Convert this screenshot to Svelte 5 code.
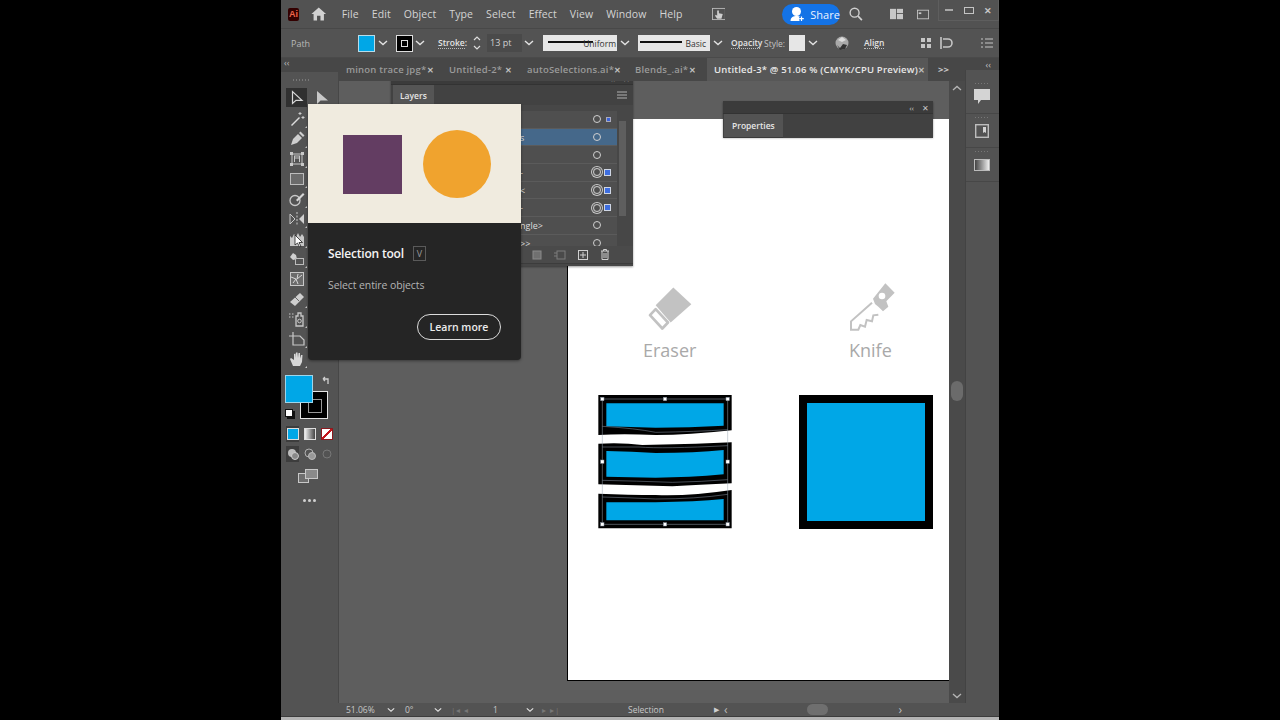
<script>
  const menus = ['File', 'Edit', 'Object', 'Type', 'Select', 'Effect', 'View', 'Window', 'Help'];
  const tabs = [
    { name: 'minon trace jpg*', w: 103 },
    { name: 'Untitled-2*', w: 78 },
    { name: 'autoSelections.ai*', w: 108 },
    { name: 'Blends_.ai*', w: 76 }
  ];
  const layerRows = [
    { label: '', target: 'small' },
    { label: 's', target: '', selected: true },
    { label: '', target: '' },
    { label: '-', target: 'big' },
    { label: '<', target: 'big' },
    { label: '-', target: 'big' },
    { label: 'ngle>', target: '' },
    { label: '>>', target: '' }
  ];
</script>

{#snippet chev(cls = '')}
  <svg class="chev {cls}" viewBox="0 0 10 6" width="10" height="6"><path d="M1 1l4 3.6L9 1" fill="none" stroke="#e2e2e2" stroke-width="1.4" /></svg>
{/snippet}

<div class="window">
  <header class="menubar">
    <div class="ai-logo">Ai</div>
    <svg class="home" viewBox="0 0 18 16" width="18" height="16"><path d="M9 0.5L0.5 8h2.500v7.500h4V10h4v5.500h4V8h2.500z" fill="#d2d2d2" /></svg>
    <nav class="menus">
      {#each menus as m}
        <span>{m}</span>
      {/each}
    </nav>
    <svg class="arrange" viewBox="0 0 16 14" width="16" height="14"><rect x="0.500" y="0.500" width="15" height="13" fill="none" stroke="#bdbdbd" /><path d="M6 3v6l-1.500-1-1 1L6 12.500h5L12.500 7 8 6V3z" fill="#cfcfcf" /></svg>
    <div class="share">
      <svg viewBox="0 0 16 16" width="16" height="16"><circle cx="7.500" cy="5.500" r="4.500" fill="#fff" /><path d="M1.500 15c0-4 3-5 6-5s6 1 6 5z" fill="#fff" /><path d="M12.500 10.500v4.500M10.200 12.700h4.600" stroke="#1473e6" stroke-width="3.600" /><path d="M12.500 10.500v4.500M10.200 12.700h4.600" stroke="#fff" stroke-width="1.200" /></svg>
      <span>Share</span>
    </div>
    <svg class="search" viewBox="0 0 16 16" width="16" height="16"><circle cx="6.500" cy="6.500" r="5.200" fill="none" stroke="#d0d0d0" stroke-width="1.600" /><path d="M10.500 10.500L15 15" stroke="#d0d0d0" stroke-width="2" /></svg>
    <svg class="wsp" viewBox="0 0 16 12" width="16" height="12"><rect width="7" height="12" fill="#c8c8c8" /><rect x="8" width="8" height="5" fill="#c8c8c8" /><rect x="8" y="6" width="8" height="6" fill="#c8c8c8" /></svg>
    <svg class="wsp2" viewBox="0 0 14 11" width="14" height="11"><rect x="0.500" y="0.500" width="13" height="10" fill="none" stroke="#c8c8c8" /><rect x="2" y="3" width="3" height="2" fill="#c8c8c8" /></svg>
    <div class="winbtns">
      <span class="min"></span>
      <span class="max"></span>
      <span class="close">✕</span>
    </div>
  </header>

  <div class="controlbar">
    <span class="path-label">Path</span>
    <span class="swatch fill"></span>
    {@render chev('c-fill')}
    <span class="swatch stroke"><i></i></span>
    {@render chev('c-stroke')}
    <span class="link stroke-label">Stroke:</span>
    <svg class="stepper" viewBox="0 0 8 16" width="8" height="16"><path d="M1 5l3-3 3 3M1 11l3 3 3-3" fill="none" stroke="#ddd" stroke-width="1.200" /></svg>
    <span class="field">13 pt</span>
    {@render chev('c-pt')}
    <span class="strokebox uniform"><i></i><b>Uniform</b></span>
    {@render chev('c-uni')}
    <span class="strokebox basic"><i></i><b>Basic</b></span>
    {@render chev('c-basic')}
    <span class="link opacity">Opacity</span>
    <span class="style-label">Style:</span>
    <span class="swatch style"></span>
    {@render chev('c-style')}
    <svg class="globe" viewBox="0 0 14 14" width="14" height="14"><circle cx="7" cy="7" r="6.500" fill="#aaa" /><path d="M2 9l3 3 3-4 4 1-2 4-5 1z" fill="#333" /><path d="M3 4l4-3 4 3-4 2z" fill="#ddd" /></svg>
    <span class="link align">Align</span>
    <svg class="ctl-icon i1" viewBox="0 0 12 12" width="12" height="12"><path d="M1 1h4v4H1zM7 1h4v4H7zM1 7h4v4H1zM7 7h4v4H7z" fill="#c6c6c6" /></svg>
    <svg class="ctl-icon i2" viewBox="0 0 14 12" width="14" height="12"><path d="M1 0v12M3 2h5a4 4 0 010 8H3" fill="none" stroke="#c6c6c6" stroke-width="1.600" /></svg>
    <svg class="ctl-icon i3" viewBox="0 0 12 10" width="12" height="10"><path d="M0 1h2M4 1h8M0 5h2M4 5h8M0 9h2M4 9h8" stroke="#c6c6c6" stroke-width="1.200" /></svg>
  </div>

  <div class="tabsbar">
    <span class="tabs-grip">‹‹</span>
    <div class="tabs">
      {#each tabs as t}
        <div class="tab" style="width: {t.w}px"><span>{t.name}</span><em>✕</em></div>
      {/each}
      <div class="tab active"><span>Untitled-3* @ 51.06 % (CMYK/CPU Preview)</span><em>✕</em></div>
    </div>
    <span class="more">&gt;&gt;</span>
    <span class="dock-grip">‹‹</span>
  </div>

  <div class="workspace">
    <aside class="tools">
      <div class="dots"></div>
      <div class="toolrow">
        <span class="tool sel"><svg viewBox="0 0 16 16" width="16" height="16"><path d="M3.500 1.500v12l3.500-3.200h6z" fill="none" stroke="#d8d8d8" stroke-width="1.200" /></svg></span>
        <span class="tool more-tri"><svg viewBox="0 0 16 16" width="16" height="16"><path d="M3 1v13l3.500-3.500H14z" fill="#c8c8c8" /></svg></span>
      </div>
      <span class="tool more-tri"><svg viewBox="0 0 16 16" width="16" height="16"><path d="M2 14l8-8 1 1-8 8z" fill="#ddd" /><path d="M11 1v3M9.500 2.500h3M14 5v3M12.500 6.500h3" stroke="#ccc" /></svg></span>
      <span class="tool more-tri"><svg viewBox="0 0 16 16" width="16" height="16"><path d="M2 14l2-6 5-5 4 4-5 5z" fill="#cfcfcf" /><path d="M10 2l1.500-1.500 4 4L14 6z" fill="#cfcfcf" /></svg></span>
      <span class="tool more-tri"><svg viewBox="0 0 16 16" width="16" height="16"><path d="M3 3h10v10H3z" fill="none" stroke="#c8c8c8" /><path d="M5.500 5v6M10.500 5v6M5 5h6M5 7h6" stroke="#c8c8c8" /><path d="M1 1h3v3H1zM12 1h3v3h-3zM1 12h3v3H1zM12 12h3v3h-3z" fill="#c8c8c8" /></svg></span>
      <span class="tool more-tri"><svg viewBox="0 0 16 16" width="16" height="16"><rect x="1.500" y="2.500" width="13" height="11" fill="#6b6b6b" stroke="#bcbcbc" /></svg></span>
      <span class="tool more-tri"><svg viewBox="0 0 16 16" width="16" height="16"><circle cx="6" cy="9.500" r="5" fill="none" stroke="#c8c8c8" stroke-width="1.300" /><path d="M7 9l7-7 1.500 1.500-7 7z" fill="#d6d6d6" /></svg></span>
      <span class="tool more-tri"><svg viewBox="0 0 16 16" width="16" height="16"><path d="M1 3v10l5-5z" fill="none" stroke="#c8c8c8" /><path d="M15 3v10l-5-5z" fill="#d0d0d0" /><path d="M8 1v14" stroke="#c8c8c8" stroke-dasharray="2 1.500" /></svg></span>
      <span class="tool more-tri"><svg viewBox="0 0 16 16" width="16" height="16"><path d="M1 15V5l2 2 2-4 2 3 2-4 2 4 2-3 2 3v9z" fill="#c8c8c8" /></svg></span>
      <span class="tool more-tri"><svg viewBox="0 0 16 16" width="16" height="16"><path d="M1 6l3-4 3 2 1 4-4 1z" fill="#d0d0d0" /><rect x="6.500" y="7.500" width="8" height="6" fill="none" stroke="#bcbcbc" /></svg></span>
      <span class="tool"><svg viewBox="0 0 16 16" width="16" height="16"><rect x="1.500" y="1.500" width="13" height="13" fill="#6b6b6b" stroke="#c8c8c8" /><path d="M2 6l5 2 2 5M8 8l5-4M4 12l3-4M9 3l-1 5" stroke="#d8d8d8" fill="none" /></svg></span>
      <span class="tool more-tri"><svg viewBox="0 0 16 16" width="16" height="16"><path d="M1 11L11 2l4 4L6 15z" fill="#cfcfcf" /><path d="M6 6l4 4" stroke="#666" /></svg></span>
      <span class="tool more-tri"><svg viewBox="0 0 16 16" width="16" height="16"><path d="M7 5h2V2h3v3h2v10H7z" fill="none" stroke="#c8c8c8" stroke-width="1.300" /><circle cx="10.500" cy="10" r="1.800" fill="none" stroke="#c8c8c8" /><path d="M0 3h1.500M3 3h1.500M0 6h1.500M3 6h1.500" stroke="#c8c8c8" /></svg></span>
      <span class="tool more-tri"><svg viewBox="0 0 16 16" width="16" height="16"><path d="M0 5h11l4 4v5H4V1" fill="none" stroke="#c8c8c8" stroke-width="1.200" /></svg></span>
      <span class="tool more-tri"><svg viewBox="0 0 16 16" width="16" height="16"><path d="M4 15L1 8l1-1 3 2V3l1.500-.5L7 7V1.500h1.500L9 7l.5-5H11v5.500L12 4h1.500L13 11l-2 4z" fill="#d8d8d8" /></svg></span>

      <div class="colors">
        <svg class="swap" viewBox="0 0 10 10" width="10" height="10"><path d="M2 3h5v5M2 3l2-2M2 3l2 2" fill="none" stroke="#cfcfcf" stroke-width="1.300" /></svg>
        <span class="big-stroke"><i></i></span>
        <span class="big-fill"></span>
        <span class="defaults"></span>
      </div>
      <div class="moderow">
        <span class="mode on"><i class="m-color"></i></span>
        <span class="mode"><i class="m-grad"></i></span>
        <span class="mode"><i class="m-none"></i></span>
      </div>
      <div class="moderow draw">
        <span class="mode on"><svg viewBox="0 0 12 12" width="12" height="12"><circle cx="5" cy="5" r="4" fill="#bbb" /><circle cx="8" cy="8" r="3.500" fill="#888" stroke="#ccc" /></svg></span>
        <span class="mode"><svg viewBox="0 0 12 12" width="12" height="12"><circle cx="5" cy="5" r="4" fill="none" stroke="#b0b0b0" /><circle cx="8" cy="8" r="3.500" fill="#999" stroke="#bbb" /></svg></span>
        <span class="mode"><svg viewBox="0 0 12 12" width="12" height="12"><circle cx="6" cy="6" r="4" fill="none" stroke="#777" /></svg></span>
      </div>
      <svg class="screen" viewBox="0 0 20 14" width="20" height="14"><rect x="0.500" y="4.500" width="10" height="9" fill="#6e6e6e" stroke="#c8c8c8" /><rect x="7.500" y="0.500" width="12" height="9" fill="#8a8a8a" stroke="#c8c8c8" /></svg>
      <div class="ellipsis"><i></i><i></i><i></i></div>
    </aside>

    <main class="canvas">
      <div class="artboard">
        <svg class="pic eraser" viewBox="160 15 150 140" width="50" height="47">
          <path d="M248 25l54 50-62 55-45-52z" fill="#c2c2c2" />
          <path d="M195 90l-17 18 37 40 17-18z" fill="#fff" stroke="#c2c2c2" stroke-width="8" stroke-linejoin="round" />
        </svg>
        <span class="caption c-eraser">Eraser</span>
        <svg class="pic knife" viewBox="770 10 150 150" width="50" height="50">
          <path d="M885 14l28 28-25 26 6 16-16 14-14-14-10-8-6-16z" fill="#c2c2c2" />
          <circle cx="875" cy="52" r="10" fill="#fff" />
          <path d="M845 72L782 128v25h22l6-14 14 5 5-20 16 4 4-18 15-2" fill="#fff" stroke="#c2c2c2" stroke-width="6" />
        </svg>
        <span class="caption c-knife">Knife</span>

        <svg class="pic split" viewBox="0 0 480 450" width="160" height="150">
          <path d="M28 30H428V136Q300 150 200 150Q100 146 28 150Z" fill="#000" />
          <path d="M52 55H404V122Q300 128 200 128L52 124Z" fill="#00a7e7" />
          <path d="M28 176Q100 172 160 180L320 176L428 172V295Q330 300 250 304L28 298Z" fill="#000" />
          <path d="M52 198Q130 200 200 204Q320 204 404 195V268Q300 278 200 278L52 275Z" fill="#00a7e7" />
          <path d="M28 326Q120 330 200 330Q300 334 428 315V430H28Z" fill="#000" />
          <path d="M52 352L200 352Q320 350 404 342V406H52Z" fill="#00a7e7" />
          <path d="M40 42H416V418H40Z" fill="none" stroke="#9aa6b4" stroke-width="1.500" />
          <path d="M40 124Q140 130 200 142Q320 140 416 134M40 186L150 186Q220 192 416 182M40 286Q140 288 250 292Q340 290 416 284M40 336Q120 338 200 342Q320 342 416 328" fill="none" stroke="#8d99a8" stroke-width="1.500" />
          {#each [[40, 42], [228, 42], [416, 42], [40, 230], [416, 230], [40, 418], [228, 418], [416, 418]] as [x, y]}
            <rect x={x - 5} y={y - 5} width="10" height="10" fill="#fff" stroke="#7f8a99" stroke-width="1.500" />
          {/each}
        </svg>

        <div class="pic whole"></div>
      </div>

      <section class="layers">
        <div class="float-head"><span>‹‹</span><em>✕</em></div>
        <div class="float-tabs">
          <span class="float-tab">Layers</span>
          <svg viewBox="0 0 10 8" width="10" height="8"><path d="M0 1h10M0 4h10M0 7h10" stroke="#b0b0b0" /></svg>
        </div>
        <div class="layer-list">
          <div class="rows">
            {#each layerRows as r}
              <div class="lrow" class:selected={r.selected}>
                <span class="ltext">{r.label}</span>
                <span class="target" class:ring={r.target === 'big'}></span>
                <span class="mark {r.target}"></span>
              </div>
            {/each}
          </div>
          <div class="lscroll"><i></i></div>
        </div>
        <div class="layer-foot">
          <svg viewBox="0 0 10 10" width="10" height="10"><rect x="1" y="1" width="8" height="8" fill="#707070" stroke="#8a8a8a" /></svg>
          <svg viewBox="0 0 12 10" width="12" height="10"><rect x="3" y="1" width="8" height="8" fill="none" stroke="#7d7d7d" /><path d="M0 3h3M0 6h3" stroke="#7d7d7d" /></svg>
          <svg viewBox="0 0 10 10" width="10" height="10"><rect x="0.500" y="0.500" width="9" height="9" fill="none" stroke="#d0d0d0" /><path d="M5 2v6M2 5h6" stroke="#d0d0d0" /></svg>
          <svg viewBox="0 0 10 11" width="10" height="11"><path d="M1 2h8M3.500 2V.500h3V2M2 2v8.500h6V2M4 4v5M6 4v5" fill="none" stroke="#d0d0d0" /></svg>
        </div>
      </section>

      <section class="properties">
        <div class="float-head"><span>‹‹</span><em>✕</em></div>
        <div class="float-tabs"><span class="float-tab">Properties</span></div>
      </section>
    </main>

    <div class="vscroll">
      <svg viewBox="0 0 10 6" width="10" height="6"><path d="M1 5l4-3.600L9 5" fill="none" stroke="#b5b5b5" stroke-width="1.300" /></svg>
      <i></i>
      <svg viewBox="0 0 10 6" width="10" height="6"><path d="M1 1l4 3.600L9 1" fill="none" stroke="#b5b5b5" stroke-width="1.300" /></svg>
    </div>

    <aside class="dock">
      <div class="dock-item"><svg viewBox="0 0 16 15" width="16" height="15"><path d="M0 0h16v11H7l-3 4v-4H0z" fill="#d4d4d4" /></svg></div>
      <div class="dock-item"><svg viewBox="0 0 14 14" width="14" height="14"><rect x="0.700" y="0.700" width="12.600" height="12.600" fill="none" stroke="#bdbdbd" stroke-width="1.400" /><path d="M8 3h3v6l-1.500-1L8 9z" fill="#d4d4d4" /></svg></div>
      <div class="dock-item"><span class="grad"></span></div>
    </aside>
  </div>

  <footer class="status">
    <span class="st zoom">51.06%</span>
    {@render chev('s-a')}
    <span class="st rot">0°</span>
    {@render chev('s-b')}
    <span class="nav n1">|◂ ◂</span>
    <span class="st page">1</span>
    {@render chev('s-c')}
    <span class="nav n2">▸ ▸|</span>
    <span class="st mode-text">Selection</span>
    <span class="play">▶</span>
    <span class="arrow a-left">‹</span>
    <span class="hthumb"></span>
    <span class="arrow a-right">›</span>
  </footer>
  <div class="edge"></div>

  <div class="tooltip">
    <div class="tip-art">
      <span class="tip-square"></span>
      <span class="tip-circle"></span>
    </div>
    <div class="tip-body">
      <div class="tip-title"><strong>Selection tool</strong><kbd>V</kbd></div>
      <p>Select entire objects</p>
      <button>Learn more</button>
    </div>
  </div>

  <svg class="cursor" viewBox="0 0 10 14" width="10" height="14"><path d="M1 1v10l2.500-2 2 4 1.500-.7-2-3.800h3.500z" fill="#fff" stroke="#222" stroke-width="0.800" /></svg>
</div>

<style>
  :global(body) {
    margin: 0;
    background: #000;
    font-family: "Open Sans", "Liberation Sans", sans-serif;
  }
  .window {
    position: relative;
    width: 718px;
    height: 720px;
    margin-left: 281px;
    background: #535353;
    color: #d6d6d6;
    display: flex;
    flex-direction: column;
    overflow: hidden;
    font-size: 10px;
  }

  /* menu bar */
  .menubar {
    height: 29px;
    flex: none;
    display: flex;
    align-items: center;
    background: #525252;
    border-bottom: 1px solid #484848;
    box-sizing: border-box;
  }
  .ai-logo {
    width: 13px;
    height: 13px;
    margin-left: 7px;
    background: #300;
    color: #ff8a3c;
    color: #f0654a;
    font: 700 9px/13px "Liberation Sans", sans-serif;
    text-align: center;
    border-radius: 2px;
  }
  .home {
    margin-left: 12px;
  }
  .menus {
    display: flex;
    gap: 13px;
    margin-left: 15px;
    font-size: 10.500px;
    letter-spacing: 0.100px;
    color: #d4d4d4;
  }
  .arrange {
    margin-left: 29px;
  }
  .share {
    margin-left: 57px;
    width: 63px;
    height: 21px;
    border-radius: 11px;
    background: #1473e6;
    display: flex;
    align-items: center;
    gap: 5px;
    box-sizing: border-box;
    padding-left: 7px;
    color: #eaf2ff;
    font-size: 11px;
  }
  .search {
    margin-left: 9px;
  }
  .wsp {
    margin-left: 27px;
  }
  .wsp2 {
    margin-left: 14px;
  }
  .winbtns {
    display: flex;
    margin-left: 9px;
    align-items: center;
    height: 21px;
    align-self: flex-start;
    gap: 0;
    border: 1px solid #5e5e5e;
    border-top: none;
    box-sizing: border-box;
    width: 70px;
  }
  .winbtns span {
    flex: 1;
    display: flex;
    justify-content: center;
    align-items: center;
    color: #c6c6c6;
    font-size: 9px;
    font-weight: 700;
  }
  .min::before {
    content: '';
    width: 8px;
    height: 2px;
    background: #a8a8a8;
  }
  .max::before {
    content: '';
    width: 8px;
    height: 5px;
    border: 1.500px solid #c4c4c4;
  }

  /* control bar */
  .controlbar {
    height: 29px;
    flex: none;
    display: flex;
    align-items: center;
    background: #535353;
    font-size: 9px;
    border-bottom: 1px solid #4a4a4a;
    box-sizing: border-box;
  }
  .path-label {
    margin-left: 10px;
    width: 25px;
    color: #b8b8b8;
  }
  .swatch {
    width: 15px;
    height: 15px;
    flex: none;
    display: block;
  }
  .fill {
    margin-left: 42px;
    background: #00a7e7;
    border: 1px solid #b8dcea;
  }
  .stroke {
    margin-left: 8px;
    background: #000;
    border: 1px solid #ddd;
    display: flex;
    align-items: center;
    justify-content: center;
  }
  .stroke i {
    width: 5px;
    height: 5px;
    border: 1.500px solid #ddd;
  }
  .chev {
    flex: none;
  }
  .c-fill {
    margin-left: 3px;
  }
  .c-stroke {
    margin-left: 2px;
  }
  .link {
    border-bottom: 1px dotted #bbb;
    line-height: 11px;
    color: #e4e4e4;
    font-weight: 600;
    font-size: 8.500px;
  }
  .stroke-label {
    margin-left: 13px;
    width: 27px;
    white-space: nowrap;
  }
  .stepper {
    margin-left: 8px;
  }
  .field {
    margin-left: 6px;
    width: 32px;
    height: 18px;
    line-height: 18px;
    padding-left: 3px;
    background: #4a4a4a;
    color: #d0d0d0;
  }
  .c-pt {
    margin-left: 2px;
  }
  .strokebox {
    position: relative;
    display: block;
    height: 16px;
    background: #e6e6e6;
    flex: none;
    overflow: hidden;
  }
  .strokebox i {
    position: absolute;
    left: 5px;
    right: 24px;
    top: 6px;
    height: 2px;
    background: #111;
  }
  .strokebox b {
    position: absolute;
    right: 1px;
    top: 3px;
    font-weight: 400;
    color: #333;
    font-size: 8.500px;
  }
  .uniform {
    margin-left: 9px;
    width: 74px;
  }
  .c-uni {
    margin-left: 3px;
  }
  .basic {
    margin-left: 8px;
    width: 72px;
  }
  .basic i {
    right: 28px;
    left: 2px;
  }
  .basic b {
    right: 4px;
  }
  .c-basic {
    margin-left: 3px;
  }
  .opacity {
    margin-left: 8px;
    width: 29px;
  }
  .style-label {
    margin-left: 4px;
    color: #c4c4c4;
    width: 21px;
    font-size: 8.500px;
  }
  .style {
    margin-left: 4px;
    width: 16px;
    height: 16px;
    background: #e6e6e6;
  }
  .c-style {
    margin-left: 3px;
  }
  .globe {
    margin-left: 17px;
  }
  .align {
    margin-left: 15px;
  }
  .i1 {
    margin-left: 36px;
  }
  .i2 {
    margin-left: 8px;
  }
  .i3 {
    margin-left: 27px;
  }

  /* document tabs */
  .tabsbar {
    height: 23px;
    flex: none;
    display: flex;
    background: #474747;
    font-size: 9.500px;
    position: relative;
  }
  .tabs-grip {
    width: 58px;
    flex: none;
    background: #474747;
    font-size: 9px;
    padding-left: 3px;
    box-sizing: border-box;
    line-height: 10px;
    color: #bcbcbc;
  }
  .tabs {
    display: flex;
    width: 589px;
    flex: none;
  }
  .tab {
    display: flex;
    align-items: center;
    box-sizing: border-box;
    padding: 0 0 0 7px;
    justify-content: space-between;
    padding-right: 8px;
    font-weight: 600;
    color: #9a9a9a;
    letter-spacing: 0.200px;
    white-space: nowrap;
    overflow: hidden;
    flex: none;
    font-size: 9.500px;
  }
  .tab em {
    font-style: normal;
    font-size: 8px;
    color: #c0c0c0;
  }
  .tab.active {
    width: 221px;
    background: #575757;
    color: #e8e8e8;
    margin-left: 3px;
  }
  .more {
    margin-left: 10px;
    line-height: 23px;
    font-weight: 700;
    color: #c8c8c8;
  }
  .dock-grip {
    position: absolute;
    right: 8px;
    top: 0;
    font-size: 9px;
    color: #c4c4c4;
  }

  /* tools */
  .workspace {
    flex: 1;
    min-height: 0;
    display: flex;
    position: relative;
  }
  .tools {
    position: relative;
    z-index: 1;
    margin-top: -9px;
    width: 58px;
    flex: none;
    background: #535353;
    border-right: 1px solid #474747;
    box-sizing: border-box;
    display: flex;
    flex-direction: column;
    padding: 7px 0 0 5px;
  }
  .dots {
    width: 16px;
    height: 2px;
    margin: 0 0 7px 7px;
    background: repeating-linear-gradient(90deg, #777 0 1px, transparent 1px 3px);
  }
  .toolrow {
    display: flex;
    gap: 4px;
    margin-bottom: 1px;
  }
  .tool {
    position: relative;
    width: 21px;
    height: 20px;
    display: flex;
    align-items: center;
    justify-content: center;
    flex: none;
  }
  .tool.sel {
    height: 19px;
    background: #303030;
  }
  .more-tri::after {
    content: '';
    position: absolute;
    right: 0;
    bottom: 1px;
    border: 1.500px solid transparent;
    border-right-color: #ccc;
    border-bottom-color: #ccc;
  }
  .colors {
    position: relative;
    height: 46px;
    margin: 6px 0 0 -1px;
    width: 46px;
  }
  .big-fill {
    position: absolute;
    left: 0;
    top: 0;
    width: 28px;
    height: 28px;
    box-sizing: border-box;
    background: #00a7e7;
    border: 1px solid #9ed6ec;
  }
  .big-stroke {
    position: absolute;
    left: 15px;
    top: 16px;
    width: 28px;
    height: 28px;
    box-sizing: border-box;
    background: #000;
    border: 1px solid #e4e4e4;
  }
  .big-stroke i {
    position: absolute;
    left: 7px;
    top: 7px;
    width: 12px;
    height: 12px;
    border: 1.500px solid #999;
  }
  .swap {
    position: absolute;
    left: 36px;
    top: 1px;
  }
  .defaults {
    position: absolute;
    left: 0;
    top: 34px;
    width: 6px;
    height: 6px;
    background: #fff;
    border: 1px solid #111;
    box-shadow: 2px 2px 0 #111;
  }
  .moderow {
    display: flex;
    gap: 4px;
    margin: 5px 0 0 0;
    height: 16px;
  }
  .moderow.draw {
    margin-top: 4px;
  }
  .mode {
    width: 13px;
    height: 16px;
    display: flex;
    align-items: center;
    justify-content: center;
  }
  .mode.on {
    background: #3d3d3d;
  }
  .mode i {
    width: 10px;
    height: 10px;
    border: 1px solid #ddd;
    display: block;
  }
  .m-color {
    background: #00a7e7;
  }
  .m-grad {
    background: linear-gradient(90deg, #eee, #444);
  }
  .m-none {
    background: linear-gradient(135deg, #fff 42%, #c4161c 42% 58%, #fff 58%);
    border-color: #8a1a1f !important;
  }
  .screen {
    margin: 7px 0 0 12px;
  }
  .ellipsis {
    display: flex;
    gap: 2px;
    margin: 16px 0 0 17px;
  }
  .ellipsis i {
    width: 3px;
    height: 3px;
    border-radius: 50%;
    background: #d0d0d0;
  }

  /* canvas */
  .canvas {
    position: relative;
    flex: 1;
    min-width: 0;
    background: #5e5e5e;
    overflow: hidden;
  }
  .artboard {
    position: absolute;
    left: 228px;
    top: 38px;
    width: 382px;
    height: 562px;
    background: #fff;
    box-sizing: border-box;
    border-left: 1px solid #000;
    border-bottom: 1px solid #000;
  }
  .pic {
    position: absolute;
  }
  .eraser {
    left: 76px;
    top: 165px;
  }
  .knife {
    left: 279px;
    top: 163px;
  }
  .caption {
    position: absolute;
    top: 219px;
    font-family: "Open Sans", sans-serif;
    font-size: 18px;
    line-height: 24px;
    color: #a9a9a9;
  }
  .c-eraser {
    left: 75px;
  }
  .c-knife {
    left: 281px;
  }
  .split {
    left: 21px;
    top: 266px;
  }
  .whole {
    left: 231px;
    top: 276px;
    width: 118px;
    height: 118px;
    background: #00a7e7;
    border: 8px solid #000;
  }

  /* floating panels */
  .layers {
    position: absolute;
    left: 52px;
    top: -8px;
    width: 242px;
    height: 193px;
    background: #474747;
    display: flex;
    flex-direction: column;
    box-shadow: 0 1px 2px rgba(0, 0, 0, 0.4);
  }
  .float-head {
    height: 11px;
    flex: none;
    background: #3b3b3b;
    display: flex;
    justify-content: flex-end;
    gap: 8px;
    align-items: center;
    padding-right: 3px;
    font-size: 8px;
    color: #c8c8c8;
    border-bottom: 1px solid #333;
  }
  .float-head em {
    font-style: normal;
    font-size: 8px;
  }
  .float-tabs {
    height: 20px;
    flex: none;
    display: flex;
    align-items: stretch;
    justify-content: space-between;
    background: #424242;
    padding-left: 2px;
  }
  .float-tabs svg {
    align-self: center;
    margin-right: 6px;
  }
  .float-tab {
    background: #555;
    padding: 0 7px;
    display: flex;
    align-items: center;
    font-size: 8.500px;
    font-weight: 600;
    color: #e6e6e6;
  }
  .layer-list {
    margin: 6px 5px 0 4px;
    height: 135px;
    display: flex;
    overflow: hidden;
    background: #4f4f4f;
  }
  .rows {
    flex: 1;
    min-width: 0;
  }
  .lrow {
    height: 17.700px;
    display: flex;
    align-items: center;
    justify-content: flex-end;
    position: relative;
    border-bottom: 1px solid #5b5b5b;
    box-sizing: border-box;
    color: #dcdcdc;
    font-size: 9px;
  }
  .lrow.selected {
    background: #45688a;
  }
  .ltext {
    position: absolute;
    left: 125px;
  }
  .target {
    width: 6px;
    height: 6px;
    border: 1px solid #d0d0d0;
    border-radius: 50%;
    margin-right: 16px;
  }
  .target.ring {
    box-shadow: 0 0 0 1px #4f4f4f, 0 0 0 2px #c8c8c8;
  }
  .mark {
    position: absolute;
    right: 6px;
  }
  .mark.small {
    width: 3px;
    height: 3px;
    background: #3b63d8;
    border: 1px solid #aab;
  }
  .mark.big {
    width: 5px;
    height: 5px;
    background: #3e6ee0;
    border: 1px solid #cfd6e4;
  }
  .lscroll {
    width: 11px;
    flex: none;
    background: #474747;
    position: relative;
  }
  .lscroll i {
    position: absolute;
    left: 2px;
    right: 2px;
    top: 10px;
    height: 95px;
    background: #5e5e5e;
  }
  .layer-foot {
    display: flex;
    align-items: center;
    justify-content: flex-end;
    gap: 12px;
    height: 17px;
    padding-right: 23px;
    background: #4a4a4a;
    border-bottom: 1px solid #3c3c3c;
  }
  .properties {
    position: absolute;
    left: 384px;
    top: 20px;
    width: 210px;
    height: 36px;
    background: #414141;
    box-shadow: 0 1px 2px rgba(0, 0, 0, 0.4);
    display: flex;
    flex-direction: column;
  }
  .properties .float-tabs {
    height: 24px;
    padding-left: 1px;
    background: #414141;
  }
  .properties .float-tab {
    background: #535353;
    padding: 0 8px;
    border-bottom: 1px solid #3a3a3a;
  }
  .properties .float-head {
    padding-right: 4px;
    height: 12px;
  }

  /* right side */
  .vscroll {
    width: 16px;
    flex: none;
    background: #4a4a4a;
    position: relative;
    display: flex;
    flex-direction: column;
    justify-content: space-between;
    align-items: center;
    padding: 4px 0;
    box-sizing: border-box;
  }
  .vscroll i {
    position: absolute;
    left: 2px;
    top: 300px;
    width: 12px;
    height: 20px;
    border-radius: 6px;
    background: #6b6b6b;
  }
  .dock {
    width: 34px;
    flex: none;
    margin-top: -11px;
    position: relative;
    z-index: 1;
    background: #535353;
    border-left: 1px solid #434343;
    box-sizing: border-box;
    padding-top: 10px;
  }
  .dock-item {
    height: 34px;
    display: flex;
    align-items: center;
    justify-content: center;
    padding-right: 2px;
    box-sizing: border-box;
    border-bottom: 1px solid #474747;
    background-image: repeating-linear-gradient(90deg, #777 0 1px, transparent 1px 3px);
    background-size: 14px 1px;
    background-position: 9px 3px;
    background-repeat: no-repeat;
  }
  .grad {
    width: 14px;
    height: 10px;
    background: linear-gradient(90deg, #444, #eee);
    border: 1px solid #bbb;
  }

  /* status bar */
  .status {
    height: 14px;
    flex: none;
    display: flex;
    align-items: center;
    background: #535353;
    font-size: 8.500px;
    color: #c8c8c8;
    border-bottom: 1px solid #3c3c3c;
    box-sizing: border-box;
  }
  .st {
    display: block;
  }
  .zoom {
    margin-left: 65px;
    width: 39px;
  }
  .s-a {
    margin-left: 1px;
    transform: scale(0.8);
  }
  .rot {
    margin-left: 9px;
    width: 28px;
  }
  .s-b {
    transform: scale(0.8);
  }
  .nav {
    margin-left: 8px;
    width: 40px;
    color: #777;
    letter-spacing: 1px;
    font-size: 8px;
  }
  .n2 {
    margin-left: 7px;
    width: 26px;
  }
  .page {
    margin-left: 0;
    width: 32px;
    padding-left: 2px;
  }
  .s-c {
    transform: scale(0.8);
  }
  .mode-text {
    margin-left: 60px;
    width: 68px;
  }
  .play {
    font-size: 7px;
    color: #d0d0d0;
    margin-left: 18px;
  }
  .arrow {
    font-size: 12px;
    line-height: 12px;
    color: #bbb;
  }
  .a-left {
    margin-left: 5px;
  }
  .hthumb {
    margin-left: 79px;
    width: 21px;
    height: 11px;
    border-radius: 6px;
    background: #6f6f6f;
  }
  .a-right {
    margin-left: 71px;
  }
  .edge {
    height: 3px;
    flex: none;
    background: #b4b4b4;
  }

  /* tooltip */
  .tooltip {
    position: absolute;
    left: 27px;
    top: 104px;
    width: 213px;
    height: 256px;
    background: #252525;
    border-radius: 0 0 4px 4px;
    z-index: 3;
    box-shadow: 0 1px 3px rgba(0, 0, 0, 0.4);
  }
  .tip-art {
    position: relative;
    height: 119px;
    background: #f0ebdf;
  }
  .tip-square {
    position: absolute;
    left: 35px;
    top: 31px;
    width: 59px;
    height: 59px;
    background: #633d62;
  }
  .tip-circle {
    position: absolute;
    left: 115px;
    top: 26px;
    width: 68px;
    height: 68px;
    border-radius: 50%;
    background: #f0a32e;
  }
  .tip-body {
    padding: 21px 20px 0;
    display: flex;
    flex-direction: column;
  }
  .tip-title {
    display: flex;
    align-items: center;
    gap: 9px;
    height: 18px;
    color: #f4f4f4;
    font-size: 12px;
  }
  .tip-title strong {
    font-weight: 600;
    letter-spacing: -0.200px;
  }
  kbd {
    width: 11px;
    height: 13px;
    border: 1px solid #5a5a5a;
    color: #999;
    font: 9px/13px "Open Sans", sans-serif;
    text-align: center;
  }
  .tip-body p {
    margin: 16px 0 0;
    font-size: 10.500px;
    line-height: 15px;
    color: #b4b4b4;
    letter-spacing: -0.100px;
  }
  .tip-body button {
    align-self: flex-end;
    margin: 21px 0 0;
    width: 84px;
    height: 26px;
    border-radius: 13px;
    border: 1.500px solid #dcdcdc;
    background: transparent;
    color: #ececec;
    font: 600 10.500px "Open Sans", sans-serif;
    padding: 0;
  }
  .cursor {
    position: absolute;
    left: 13px;
    top: 234px;
    z-index: 4;
  }
</style>
